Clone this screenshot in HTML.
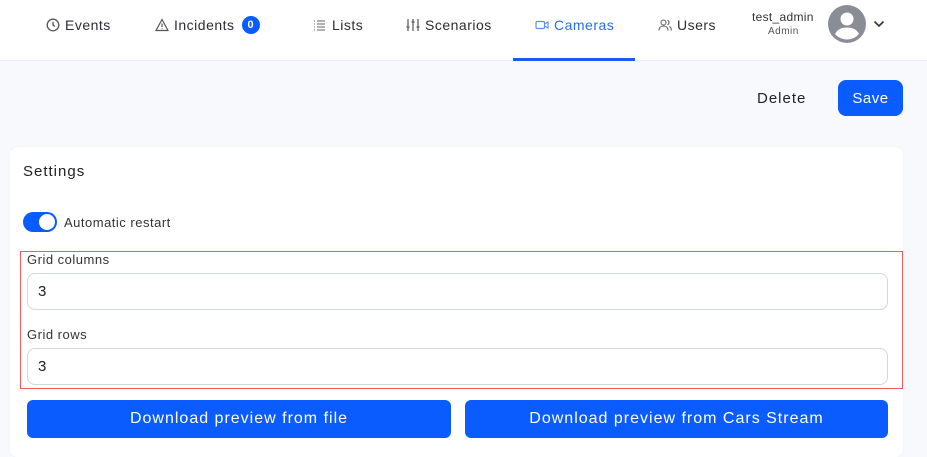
<!DOCTYPE html>
<html><head><style>
*{box-sizing:border-box;margin:0;padding:0}
body{width:927px;height:444px;overflow:hidden;background:#f8f9fc;font-family:"Liberation Sans",sans-serif;color:#222;position:relative;letter-spacing:0.5px}
.nav{position:absolute;left:0;top:0;width:927px;height:61px;background:#fff;border-bottom:1px solid #eceef3}
.it{position:absolute;top:16px;font-size:14px;color:#2c2c34;display:flex;align-items:center;gap:5px;height:18px}
.it svg{width:14px;height:14px}
.badge{display:inline-block;width:18px;height:18px;border-radius:9px;background:#0a5cff;color:#fff;font-size:11px;font-weight:bold;text-align:center;line-height:18px;margin-left:2px;letter-spacing:0}
.ul{position:absolute;left:513px;top:58px;width:122px;height:3px;background:#1a5cf0}
.abs{position:absolute}
.card{position:absolute;left:10px;top:147px;width:893px;height:310px;background:#fff;border-radius:8px;box-shadow:0 0 3px rgba(0,0,0,.04)}
.inp{position:absolute;left:27px;width:861px;height:37px;border:1.5px solid #d3d7de;border-radius:8px;background:#fff;font-size:15px;padding:9px 10px;color:#222}
.lbl{position:absolute;left:27px;font-size:13px;color:#333}
.btn{position:absolute;top:400px;height:38px;background:#0a5cff;border-radius:6px;color:#fff;font-size:16px;text-align:center;line-height:38px;letter-spacing:1px}
</style></head><body>
<div class="nav">
<div class="it" style="left:46px"><svg viewBox="0 0 14 14" fill="none" stroke="#555" stroke-width="1.3"><circle cx="7" cy="7" r="5.8"/><path d="M7 3.8V7l2 1.5"/></svg>Events</div>
<div class="it" style="left:155px"><svg viewBox="0 0 14 14" fill="none" stroke="#555" stroke-width="1.2"><path d="M7 1.5L13 12.5H1Z"/><path d="M7 5.5v3.5M7 10.5v.6"/></svg>Incidents<span class="badge">0</span></div>
<div class="it" style="left:313px"><svg viewBox="0 0 14 14" fill="none" stroke="#666" stroke-width="1.1"><path d="M1 3h1M1 6h1M1 9h1M1 12h1M4 3h8M4 6h8M4 9h8M4 12h8"/></svg>Lists</div>
<div class="it" style="left:406px"><svg viewBox="0 0 14 14" fill="none" stroke="#555" stroke-width="1.2"><path d="M2 1v12M7 1v12M12 1v12M0.5 9h3M5.5 4h3M10.5 9h3"/></svg>Scenarios</div>
<div class="it" style="left:535px;color:#2a6cf0"><svg viewBox="0 0 14 14" fill="none" stroke="#5a8ff5" stroke-width="1.2"><rect x="1" y="3.5" width="8.5" height="7" rx="1.2"/><path d="M9.5 6l3.5-2v6l-3.5-2"/></svg>Cameras</div>
<div class="it" style="left:658px"><svg viewBox="0 0 14 14" fill="none" stroke="#666" stroke-width="1.1"><circle cx="5.5" cy="4.5" r="2.5"/><path d="M1 12.5c0-3 2-4.5 4.5-4.5S10 9.5 10 12.5M9.5 2.2a2.5 2.5 0 010 4.6M11.5 8.5c1 .6 1.8 1.8 1.8 4"/></svg>Users</div>
<div class="abs" style="left:752px;top:10px;font-size:12px;color:#333;letter-spacing:0.3px">test_admin</div>
<div class="abs" style="left:768px;top:26px;font-size:10px;color:#555">Admin</div>
<svg class="abs" style="left:828px;top:5px" width="38" height="38" viewBox="0 0 38 38"><circle cx="19" cy="19" r="19" fill="#8a8d96"/><circle cx="19" cy="14" r="6.5" fill="#fff"/><path d="M7 29c2.5-5 7-6.5 12-6.5s9.5 1.5 12 6.5c-3 3.5-7.5 5.5-12 5.5S10 32.5 7 29z" fill="#fff"/></svg>
<svg class="abs" style="left:873px;top:20px" width="12" height="8" viewBox="0 0 12 8" fill="none" stroke="#333" stroke-width="1.6"><path d="M1.5 1.5L6 6l4.5-4.5"/></svg>
<div class="ul"></div>
</div>
<div class="abs" style="left:757px;top:90px;font-size:15px;color:#222;letter-spacing:1px">Delete</div>
<div class="abs" style="left:838px;top:80px;width:65px;height:36px;background:#0a5cff;border-radius:8px;color:#fff;font-size:15px;text-align:center;line-height:37px">Save</div>
<div class="card"></div>
<div class="abs" style="left:23px;top:163px;font-size:15px;color:#222;letter-spacing:1px">Settings</div>
<div class="abs" style="left:23px;top:212px;width:34px;height:20px;border-radius:10px;background:#0a5cff"><div style="position:absolute;right:2px;top:2px;width:16px;height:16px;border-radius:8px;background:#fff"></div></div>
<div class="abs" style="left:64px;top:215px;font-size:13px;color:#333">Automatic restart</div>
<div class="abs" style="left:20px;top:251px;width:883px;height:138px;border:1.5px solid #f05a5a"></div>
<div class="lbl" style="top:252px">Grid columns</div>
<div class="inp" style="top:273px">3</div>
<div class="lbl" style="top:327px">Grid rows</div>
<div class="inp" style="top:348px">3</div>
<div class="btn" style="left:27px;width:424px">Download preview from file</div>
<div class="btn" style="left:465px;width:423px">Download preview from Cars Stream</div>
</body></html>
